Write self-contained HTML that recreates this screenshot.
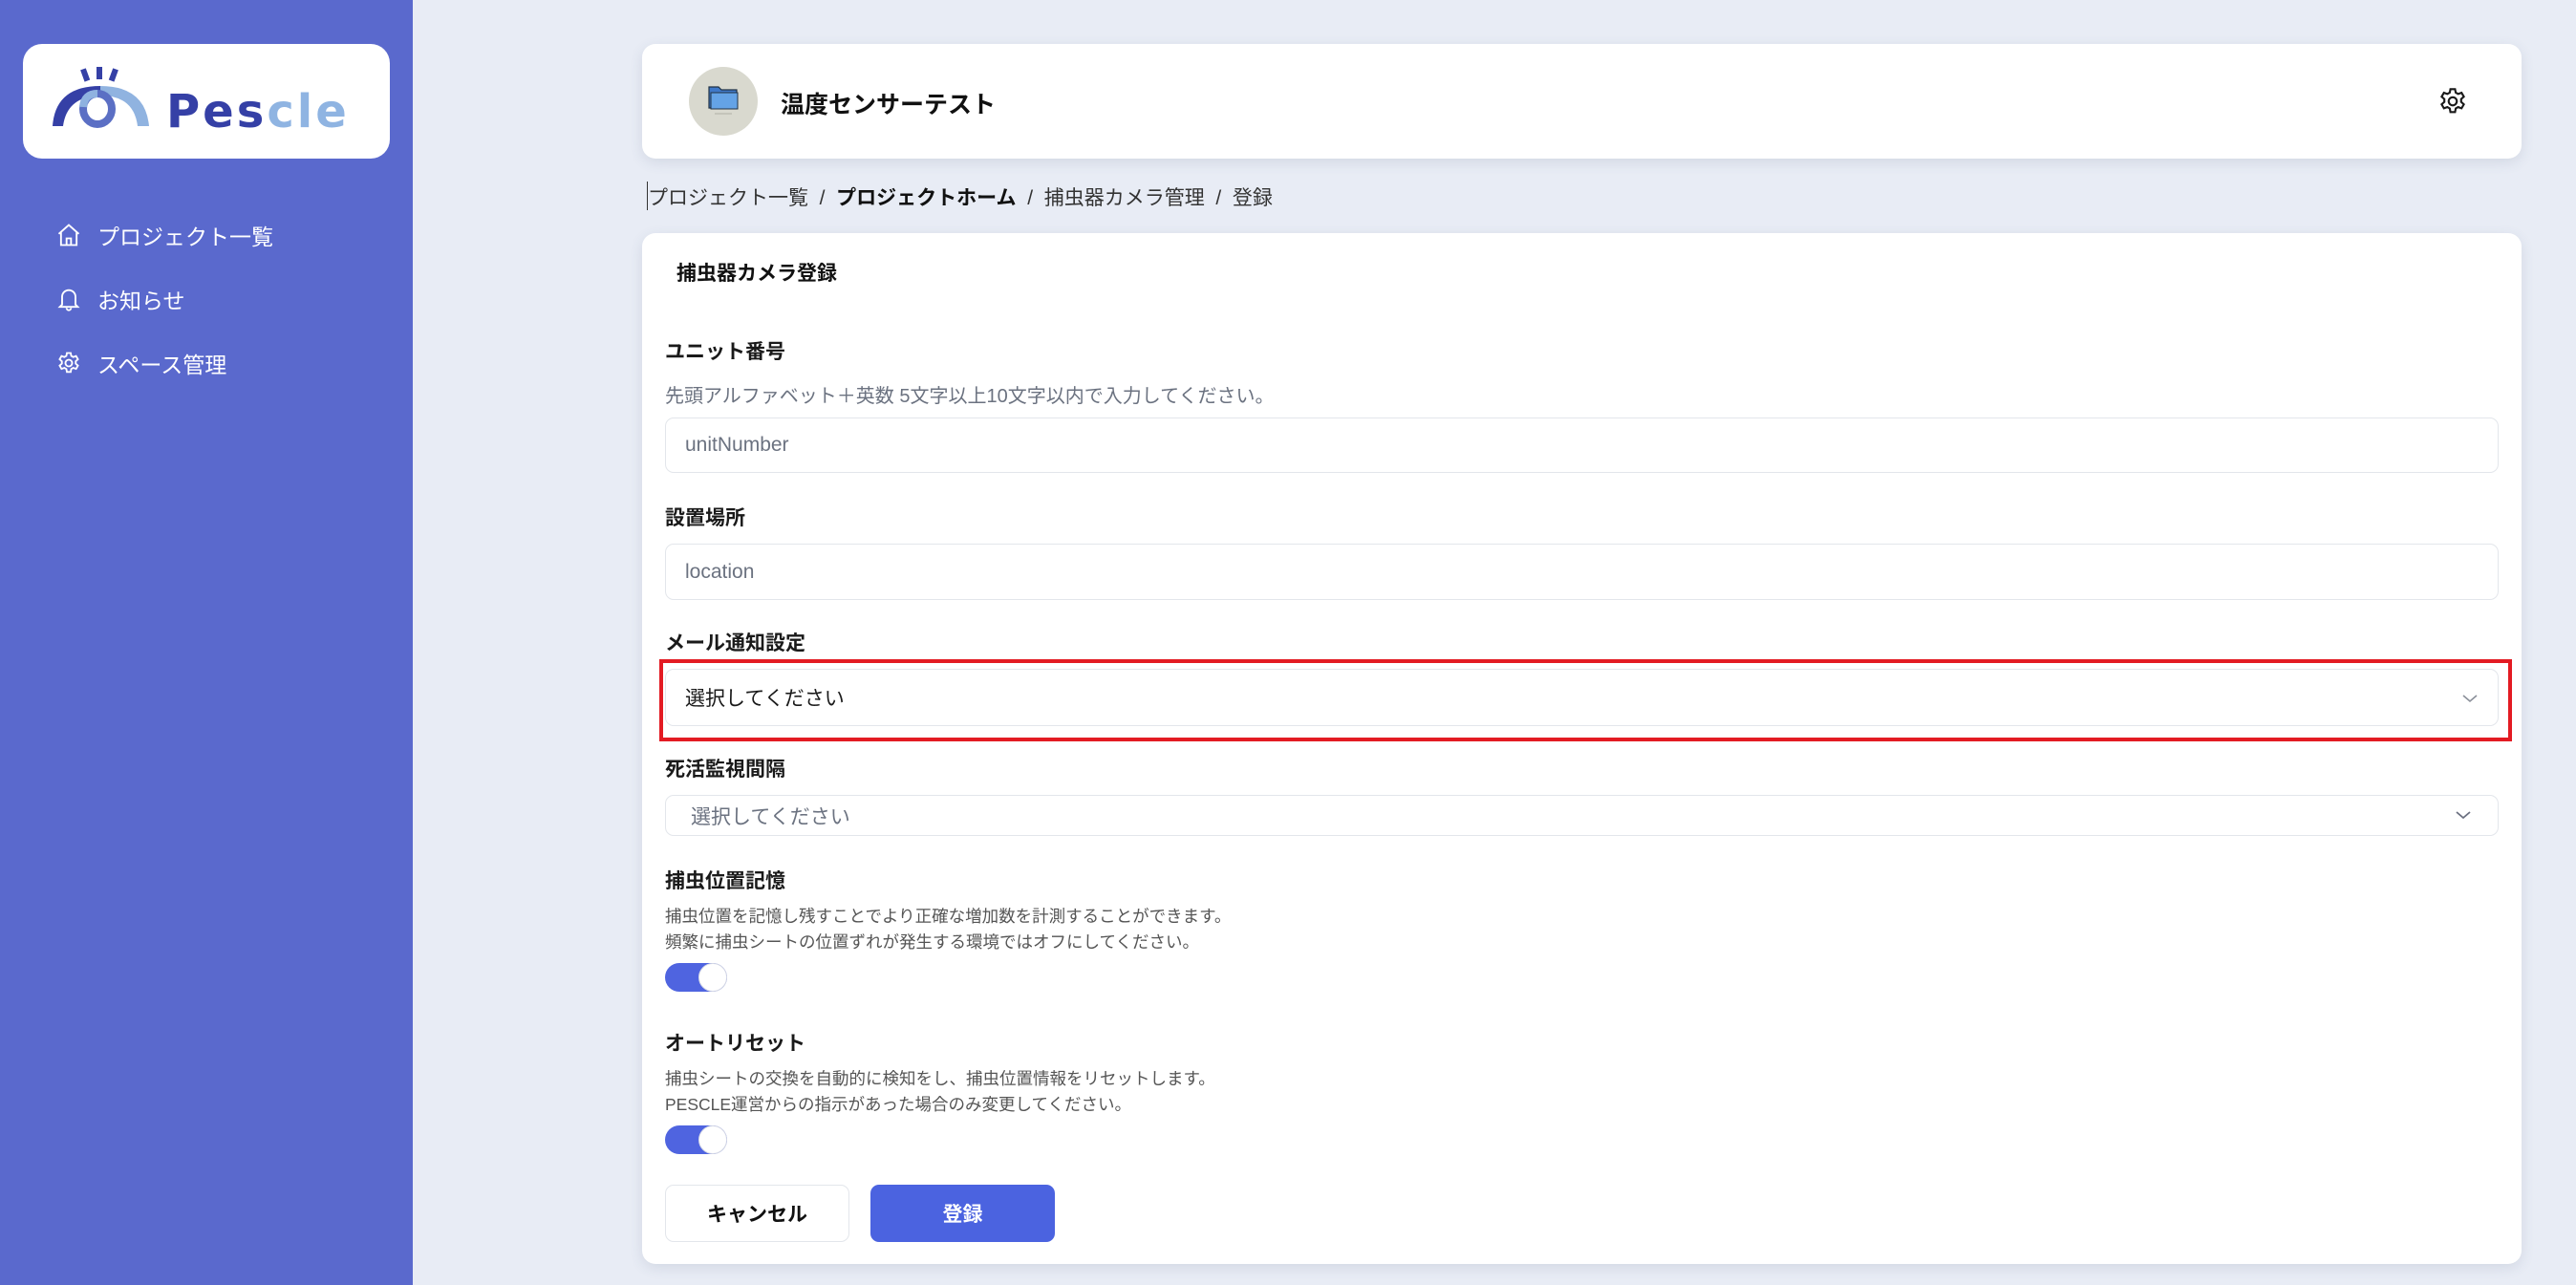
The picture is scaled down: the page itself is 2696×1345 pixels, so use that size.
<!DOCTYPE html>
<html><head><meta charset="utf-8">
<style>
*{margin:0;padding:0;box-sizing:border-box}
body{width:2696px;height:1345px;background:#e8ecf5;font-family:"Liberation Sans","Noto Sans CJK JP",sans-serif;position:relative;overflow:hidden;color:#1a1a1a}
.abs{position:absolute}
#side{left:0;top:0;width:432px;height:1345px;background:#5a69cd}
#logo{left:24px;top:46px;width:384px;height:120px;background:#fff;border-radius:20px}
.nav{position:absolute;left:58px;color:#fff;font-size:23px;display:flex;align-items:center;gap:16px;height:36px}
.nav svg{width:28px;height:28px}
.card{position:absolute;left:672px;width:1967px;background:#fff;border-radius:14px;box-shadow:0 4px 14px rgba(60,70,110,.12)}
.lbl{position:absolute;left:696px;font-size:21px;font-weight:bold;color:#1a1a1a}
.hint{position:absolute;left:696px;font-size:20px;color:#6b7280}
.desc{position:absolute;left:696px;font-size:17.5px;color:#555;line-height:27px}
.inp{position:absolute;left:696px;width:1919px;border:1.5px solid #e3e6eb;border-radius:9px;background:#fff;font-size:21px;display:flex;align-items:center;padding-left:20px;color:#6b7280}
.tog{position:absolute;left:696px;width:65px;height:30px;border-radius:15px;background:#4f64e0}
.tog::after{content:"";position:absolute;right:0;top:0;width:30px;height:30px;border-radius:50%;background:#fff;border:1.5px solid #d8dbe6;box-sizing:border-box}
.chev{position:absolute;width:16px;height:10px}
.btn{position:absolute;top:1240px;width:193px;height:60px;border-radius:9px;font-size:21px;font-weight:bold;display:flex;align-items:center;justify-content:center}
</style></head><body>
<div id="side" class="abs"></div>
<div id="logo" class="abs">
<svg class="abs" style="left:0;top:0" width="384" height="120" viewBox="24 46 384 120">
<g fill="#3540a6">
<rect x="86" y="72" width="6" height="13" transform="rotate(-20 89 78)"/>
<rect x="101" y="70" width="6" height="13"/>
<rect x="116" y="72" width="6" height="13" transform="rotate(20 119 78)"/>
</g>
<path d="M55 132 Q58 90 105 90 L105 100 Q70 101 66 132 Z" fill="#3540a6"/>
<path d="M105 90 Q152 90 156 132 L144 132 Q140 100 105 100 Z" fill="#90b3e0"/>
<ellipse cx="102" cy="114" rx="15" ry="16" fill="none" stroke="#5b6fc4" stroke-width="8"/>
<path d="M87 112 Q88 98 102 98" fill="none" stroke="#8fb2e0" stroke-width="8"/>
</svg>
<div class="abs" style="left:150px;top:46px;font-size:48px;font-weight:bold;letter-spacing:3px;line-height:50px;font-family:'DejaVu Sans','Liberation Sans',sans-serif"><span style="color:#3540a6">Pes</span><span style="color:#8fb4e2">cle</span></div>
</div>
<div class="nav" style="top:228px"><svg viewBox="0 0 24 24" fill="none" stroke="#fff" stroke-width="1.6"><path d="M3 11 12 3l9 8M5 9v12h14V9M10 21v-6h4v6"/></svg>プロジェクト一覧</div>
<div class="nav" style="top:295px"><svg viewBox="0 0 24 24" fill="none" stroke="#fff" stroke-width="1.6"><path d="M6 17V10a6 6 0 0 1 12 0v7l2 2H4z M10 20a2 2 0 0 0 4 0"/></svg>お知らせ</div>
<div class="nav" style="top:362px"><svg viewBox="0 0 24 24" fill="none" stroke="#fff" stroke-width="1.6"><circle cx="12" cy="12" r="3"/><path d="M10.3 3h3.4l.5 2.6 1.8 1 2.5-.9 1.7 2.9-2 1.8v2.1l2 1.8-1.7 2.9-2.5-.9-1.8 1-.5 2.7h-3.4l-.5-2.7-1.8-1-2.5.9-1.7-2.9 2-1.8v-2.1l-2-1.8 1.7-2.9 2.5.9 1.8-1z"/></svg>スペース管理</div>

<div class="card" style="top:46px;height:120px"></div>
<div class="abs" style="left:721px;top:70px;width:72px;height:72px;border-radius:50%;background:#d9d9cf"></div>
<svg class="abs" style="left:738px;top:88px" width="38" height="34" viewBox="0 0 38 34"><path d="M4 3h10l3 3h16v19H4z" fill="#3f78c8" stroke="#234" stroke-width="1.2"/><path d="M6 9h28v17H6z" fill="#64a3e6" stroke="#234" stroke-width="1"/><rect x="10" y="30" width="18" height="2" fill="#c4c4ba"/></svg>
<div class="abs" style="left:817px;top:90px;font-size:25px;font-weight:bold;color:#111">温度センサーテスト</div>
<svg class="abs" style="left:2550px;top:89px" width="34" height="34" viewBox="0 0 24 24" fill="none" stroke="#1a1a1a" stroke-width="1.5"><circle cx="12" cy="12" r="3"/><path d="M10.3 3h3.4l.5 2.6 1.8 1 2.5-.9 1.7 2.9-2 1.8v2.1l2 1.8-1.7 2.9-2.5-.9-1.8 1-.5 2.7h-3.4l-.5-2.7-1.8-1-2.5.9-1.7-2.9 2-1.8v-2.1l-2-1.8 1.7-2.9 2.5.9 1.8-1z"/></svg>

<div class="abs" style="left:677px;top:190px;width:1px;height:30px;background:#333"></div>
<div class="abs" style="left:678px;top:191px;font-size:21px;color:#333;white-space:nowrap">プロジェクト一覧 &nbsp;/&nbsp; <b style="color:#111">プロジェクトホーム</b> &nbsp;/&nbsp; 捕虫器カメラ管理 &nbsp;/&nbsp; 登録</div>

<div class="card" style="top:244px;height:1079px"></div>
<div class="abs" style="left:708px;top:270px;font-size:21px;font-weight:bold;color:#111">捕虫器カメラ登録</div>

<div class="lbl" style="top:352px">ユニット番号</div>
<div class="hint" style="top:398px">先頭アルファベット＋英数 5文字以上10文字以内で入力してください。</div>
<div class="inp" style="top:437px;height:58px">unitNumber</div>

<div class="lbl" style="top:526px">設置場所</div>
<div class="inp" style="top:569px;height:59px">location</div>

<div class="lbl" style="top:657px">メール通知設定</div>
<div class="abs" style="left:690px;top:690px;width:1939px;height:86px;border:4px solid #e31b23"></div>
<div class="inp" style="top:700px;height:60px;color:#1a1a1a">選択してください</div>
<svg class="chev" style="left:2577px;top:726px" viewBox="0 0 16 10"><path d="M1 2l7 6 7-6" fill="none" stroke="#8a8f99" stroke-width="1.6"/></svg>

<div class="lbl" style="top:789px">死活監視間隔</div>
<div class="inp" style="top:832px;height:43px;padding-left:26px">選択してください</div>
<svg class="chev" style="left:2570px;top:848px" viewBox="0 0 16 10"><path d="M1 2l7 6 7-6" fill="none" stroke="#6b7080" stroke-width="1.8"/></svg>

<div class="lbl" style="top:906px">捕虫位置記憶</div>
<div class="desc" style="top:946px">捕虫位置を記憶し残すことでより正確な増加数を計測することができます。<br>頻繁に捕虫シートの位置ずれが発生する環境ではオフにしてください。</div>
<div class="tog" style="top:1008px"></div>

<div class="lbl" style="top:1076px">オートリセット</div>
<div class="desc" style="top:1116px">捕虫シートの交換を自動的に検知をし、捕虫位置情報をリセットします。<br>PESCLE運営からの指示があった場合のみ変更してください。</div>
<div class="tog" style="top:1178px"></div>

<div class="btn" style="left:696px;border:1.5px solid #e3e6eb;color:#111;background:#fff">キャンセル</div>
<div class="btn" style="left:911px;background:#4b63e0;color:#fff">登録</div>
</body></html>
